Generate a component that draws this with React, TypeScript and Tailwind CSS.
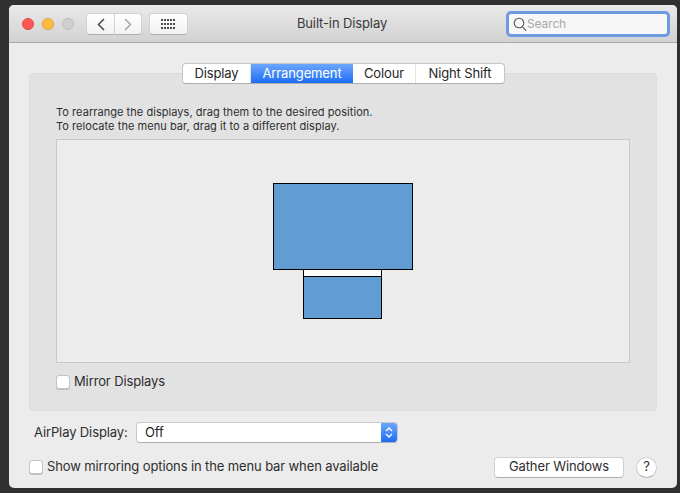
const font = "font-['Inter','Noto_Sans',sans-serif]";

function Tab({ label, active, w, last }: { label: string; active?: boolean; w: string; last?: boolean }) {
  return (
    <div
      className={`${w} h-full flex items-center justify-center text-[13px] ${
        active
          ? "bg-gradient-to-b from-[#6ba6fb] to-[#1a6cf5] text-white"
          : `text-[#262626] ${last ? "" : "border-r border-[#e3e3e3]"}`
      }`}
    >
      {label}
    </div>
  );
}

function Checkbox() {
  return <div className="w-[14px] h-[14px] rounded-[3px] bg-white border border-[#c4c4c4] shadow-[0_1px_0_#bdbdbd]" />;
}

export default function App() {
  return (
    <div className={`w-[680px] h-[493px] bg-[#303030] pl-[9px] pt-[5px] overflow-hidden tracking-[-0.12px] ${font}`}>
      <div className="w-[668px] h-[483px] rounded-[5px] bg-[#ececec] overflow-hidden flex flex-col">
        {/* toolbar */}
        <div className="h-[38px] shrink-0 pt-px bg-gradient-to-b from-[#e9e9e9] to-[#d2d2d2] border-b border-[#ababab] flex items-center">
          <div className="flex items-center gap-[8px] ml-[13px]">
            <div className="w-[12px] h-[12px] rounded-full bg-[#fc5753] border border-[#df4744]" />
            <div className="w-[12px] h-[12px] rounded-full bg-[#fdbc40] border border-[#de9f34]" />
            <div className="w-[12px] h-[12px] rounded-full bg-[#cfcfcf] border border-[#bdbdbd]" />
          </div>
          <div className="flex ml-[12px] h-[22px]">
            <div className="w-[29px] bg-gradient-to-b from-[#ffffff] to-[#f2f2f2] rounded-l-[4px] border border-[#d2d2d2] border-b-[#b0b0b0] flex items-center justify-center">
              <svg width="8" height="13" viewBox="0 0 8 13" fill="none" stroke="#4a4a4a" strokeWidth="1.5">
                <path d="M7 1 L1.5 6.5 L7 12" />
              </svg>
            </div>
            <div className="w-[27px] bg-gradient-to-b from-[#ffffff] to-[#f2f2f2] rounded-r-[4px] border border-l-0 border-[#d2d2d2] border-b-[#b0b0b0] flex items-center justify-center">
              <svg width="8" height="13" viewBox="0 0 8 13" fill="none" stroke="#a5a5a5" strokeWidth="1.5">
                <path d="M1 1 L6.5 6.5 L1 12" />
              </svg>
            </div>
          </div>
          <div className="ml-[7px] w-[39px] h-[22px] bg-gradient-to-b from-[#ffffff] to-[#f2f2f2] rounded-[4px] border border-[#d2d2d2] border-b-[#b0b0b0] flex items-center justify-center">
            <svg width="15" height="11" viewBox="0 0 15 11" fill="#4a4a4a">
              {[0, 4, 8].map((y) =>
                [0, 3, 6, 9, 12].map((x) => <rect key={`${x}-${y}`} x={x} y={y} width="2" height="2" />),
              )}
            </svg>
          </div>
          <div className="ml-[94px] w-[120px] text-center text-[13px] text-[#3a3a3a]">Built-in Display</div>
          <div className="ml-[104px] w-[164px] h-[26px] rounded-[5px] border-[3px] border-[#6d9ae0] bg-[#f7f7f7] flex items-center pl-[4px]">
            <svg width="14" height="15" viewBox="0 0 14 15" fill="none" stroke="#555" strokeWidth="1.1">
              <circle cx="6" cy="6" r="4.8" />
              <path d="M9.5 9.8 L13 13.6" />
            </svg>
            <span className="text-[12px] text-[#a9a9a9]">Search</span>
          </div>
        </div>

        {/* panel */}
        <div className="relative mx-[20px] mt-[30px] w-[628px] h-[338px] shrink-0 bg-[#e2e2e2] border border-[#dcdcdc] rounded-[4px] flex flex-col">
          <div className="absolute -top-[11px] left-[152px] w-[323px] h-[21px] bg-white rounded-[4px] border border-[#c6c6c6] border-b-[#adadad] overflow-hidden flex">
            <Tab label="Display" w="w-[68px]" />
            <Tab label="Arrangement" active w="w-[102px]" />
            <Tab label="Colour" w="w-[63px]" />
            <Tab label="Night Shift" last w="flex-1" />
          </div>
          <div className="ml-[26px] mt-[31px] text-[11px] leading-[14px] tracking-[0.05px] text-[#2e2e2e]">
            <div>To rearrange the displays, drag them to the desired position.</div>
            <div>To relocate the menu bar, drag it to a different display.</div>
          </div>
          <div className="ml-[26px] mt-[6px] w-[574px] h-[224px] bg-[#ececec] border border-[#c9c9c9] flex flex-col items-center pt-[43px]">
            <div className="w-[140px] h-[87px] bg-[#619dd3] border border-black" />
            <div className="-mt-px mr-[2px] w-[79px] h-[50px] bg-[#619dd3] border border-black">
              <div className="h-[6px] bg-white border-b border-black box-content" />
            </div>
          </div>
          <div className="ml-[26px] mt-[9px] flex items-center gap-[4px]">
            <Checkbox />
            <span className="text-[13px] text-[#2e2e2e]">Mirror Displays</span>
          </div>
        </div>

        {/* airplay */}
        <div className="ml-[25px] mt-[11px] flex items-center h-[21px]">
          <span className="text-[13px] text-[#2e2e2e] w-[102px]">AirPlay Display:</span>
          <div className="w-[262px] h-[21px] bg-white rounded-[4px] border border-[#c8c8c8] border-b-[#adadad] flex items-center justify-between overflow-hidden">
            <span className="ml-[8px] text-[13px] text-[#262626]">Off</span>
            <div className="w-[16px] h-full bg-gradient-to-b from-[#6ba6fb] to-[#1a6cf5] flex items-center justify-center">
              <svg width="8" height="13" viewBox="0 0 8 13" fill="none" stroke="white" strokeWidth="1.4">
                <path d="M1 5 L4 2 L7 5 M1 8 L4 11 L7 8" />
              </svg>
            </div>
          </div>
        </div>

        {/* footer */}
        <div className="ml-[20px] mt-[13px] flex items-center h-[22px]">
          <Checkbox />
          <span className="ml-[4px] w-[447px] text-[13px] text-[#2e2e2e]">
            Show mirroring options in the menu bar when available
          </span>
          <div className="w-[130px] h-[21px] bg-white rounded-[4px] border border-[#d0d0d0] border-b-[#adadad] flex items-center justify-center text-[13px] text-[#2e2e2e]">
            Gather Windows
          </div>
          <div className="ml-[12px] w-[21px] h-[21px] rounded-full bg-white border border-[#d0d0d0] border-b-[#adadad] flex items-center justify-center text-[13px] text-[#2e2e2e]">
            ?
          </div>
        </div>
      </div>
    </div>
  );
}
